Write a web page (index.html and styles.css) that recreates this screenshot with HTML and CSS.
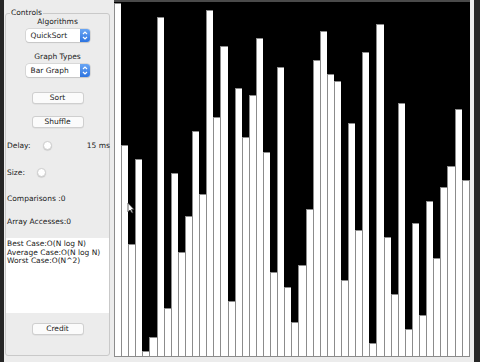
FILE: index.html
```html
<!DOCTYPE html>
<html lang="en">
<head>
    <meta charset="UTF-8">
    <meta name="viewport" content="width=device-width, initial-scale=1.0">
    <title>Sorting Visualizer</title>
    <link rel="stylesheet" href="styles.css">
</head>
<body>
    <div class="window">
        <div class="panel">
            <fieldset class="controls">
                <legend>Controls</legend>
                <div class="caption">Algorithms</div>
                <div class="popup">
                    <span>QuickSort</span>
                    <span class="stepper">
                        <svg width="10" height="13" viewBox="0 0 10 13"><path d="M3 5 L5 3 L7 5 M3 8 L5 10 L7 8" fill="none" stroke="#fff" stroke-width="1.2"/></svg>
                    </span>
                </div>
                <div class="caption gap-graph">Graph Types</div>
                <div class="popup">
                    <span>Bar Graph</span>
                    <span class="stepper">
                        <svg width="10" height="13" viewBox="0 0 10 13"><path d="M3 5 L5 3 L7 5 M3 8 L5 10 L7 8" fill="none" stroke="#fff" stroke-width="1.2"/></svg>
                    </span>
                </div>
                <button class="btn gap-sort">Sort</button>
                <button class="btn gap-shuffle">Shuffle</button>
                <div class="slider-row gap-delay">
                    <span>Delay:</span>
                    <span class="knob"></span>
                    <span class="value">15 ms</span>
                </div>
                <div class="slider-row gap-size">
                    <span>Size:</span>
                    <span class="knob"></span>
                </div>
                <div class="stat gap-comp">Comparisons :0</div>
                <div class="stat gap-access">Array Accesses:0</div>
                <div class="info">Best Case:O(N log N)<br>Average Case:O(N log N)<br>Worst Case:O(N^2)</div>
                <button class="btn gap-credit">Credit</button>
            </fieldset>
        </div>
        <div class="canvas">
            <div class="bar" style="height:353px"></div>
            <div class="bar" style="height:211px"></div>
            <div class="bar" style="height:112px"></div>
            <div class="bar" style="height:197px"></div>
            <div class="bar" style="height:5px"></div>
            <div class="bar" style="height:19px"></div>
            <div class="bar" style="height:339px"></div>
            <div class="bar" style="height:48px"></div>
            <div class="bar" style="height:183px"></div>
            <div class="bar" style="height:104px"></div>
            <div class="bar" style="height:140px"></div>
            <div class="bar" style="height:225px"></div>
            <div class="bar" style="height:162px"></div>
            <div class="bar" style="height:346px"></div>
            <div class="bar" style="height:239px"></div>
            <div class="bar" style="height:310px"></div>
            <div class="bar" style="height:55px"></div>
            <div class="bar" style="height:268px"></div>
            <div class="bar" style="height:219px"></div>
            <div class="bar" style="height:261px"></div>
            <div class="bar" style="height:318px"></div>
            <div class="bar" style="height:204px"></div>
            <div class="bar" style="height:84px"></div>
            <div class="bar" style="height:289px"></div>
            <div class="bar" style="height:69px"></div>
            <div class="bar" style="height:34px"></div>
            <div class="bar" style="height:91px"></div>
            <div class="bar" style="height:147px"></div>
            <div class="bar" style="height:296px"></div>
            <div class="bar" style="height:325px"></div>
            <div class="bar" style="height:282px"></div>
            <div class="bar" style="height:275px"></div>
            <div class="bar" style="height:76px"></div>
            <div class="bar" style="height:233px"></div>
            <div class="bar" style="height:126px"></div>
            <div class="bar" style="height:304px"></div>
            <div class="bar" style="height:13px"></div>
            <div class="bar" style="height:332px"></div>
            <div class="bar" style="height:119px"></div>
            <div class="bar" style="height:62px"></div>
            <div class="bar" style="height:253px"></div>
            <div class="bar" style="height:27px"></div>
            <div class="bar" style="height:133px"></div>
            <div class="bar" style="height:41px"></div>
            <div class="bar" style="height:155px"></div>
            <div class="bar" style="height:98px"></div>
            <div class="bar" style="height:169px"></div>
            <div class="bar" style="height:190px"></div>
            <div class="bar" style="height:247px"></div>
            <div class="bar" style="height:176px"></div>
            <svg class="cursor" width="8" height="12" viewBox="0 0 8 12"><path d="M1 1 L1 10 L3 8 L5 11 L6 10.5 L4.5 7.5 L7 7.5 Z" fill="#fff" stroke="#333" stroke-width="0.8"/></svg>
        </div>
    </div>
</body>
</html>
```

FILE: styles.css
```css
body {
    margin: 0;
    width: 480px;
    height: 362px;
    overflow: hidden;
    background-color: #262626;
    font-family: "DejaVu Sans", sans-serif;
    font-size: 7.5px;
    color: #1a1a1a;
}

.window {
    display: flex;
    margin-left: 4px;
    width: 470px;
    height: 362px;
    background-color: #ececec;
}

.panel {
    display: flex;
    width: 105px;
    padding: 8px 4px 6px 1px;
}

.controls {
    display: flex;
    flex-direction: column;
    align-items: center;
    flex: 1;
    margin: 0;
    padding: 0;
    border: 1px solid #c9c9c9;
    border-radius: 3px;
    min-width: 0;
}

.controls legend {
    margin-left: 4px;
    padding: 0 1px;
    line-height: 10px;
}

.caption {
    line-height: 8px;
}

.gap-graph { margin-top: 11px; }

.popup {
    display: flex;
    align-items: center;
    justify-content: space-between;
    box-sizing: border-box;
    width: 64px;
    height: 13px;
    margin-top: 3px;
    padding-left: 5px;
    background-color: #fff;
    border-radius: 3px;
    box-shadow: 0 0 0 0.5px #c4c4c4, 0 1px 1px rgba(0, 0, 0, 0.15);
}

.stepper {
    display: flex;
    width: 10px;
    height: 13px;
    border-radius: 0 3px 3px 0;
    background: linear-gradient(#6aa6f4, #2d74e0);
}

.btn {
    box-sizing: border-box;
    width: 52px;
    height: 12px;
    padding: 0;
    font: inherit;
    color: inherit;
    line-height: 10px;
    background-color: #fbfbfb;
    border: 1px solid #cfcfcf;
    border-radius: 3px;
    box-shadow: 0 0.5px 0.5px rgba(0, 0, 0, 0.08);
}

.gap-sort { margin-top: 15px; }
.gap-shuffle { margin-top: 12px; }
.gap-credit { margin-top: 10px; }

.slider-row {
    display: flex;
    align-items: center;
    gap: 12px;
    align-self: stretch;
    height: 10px;
    padding-left: 1px;
}

.slider-row .value {
    margin-left: auto;
    margin-right: -1px;
}

.knob {
    box-sizing: border-box;
    width: 9px;
    height: 9px;
    border-radius: 50%;
    background-color: #fff;
    border: 0.5px solid #d0d0d0;
    box-shadow: 0 0.5px 1px rgba(0, 0, 0, 0.2);
}

.gap-delay { margin-top: 12px; }
.gap-size { margin-top: 17px; }

.stat {
    align-self: stretch;
    padding-left: 1px;
    line-height: 8px;
}

.gap-comp { margin-top: 18px; }
.gap-access { margin-top: 15px; }

.info {
    align-self: stretch;
    box-sizing: border-box;
    height: 75px;
    margin-top: 12px;
    padding: 2px 1px;
    line-height: 8.7px;
    background-color: #fff;
}

.canvas {
    position: relative;
    display: flex;
    align-items: flex-end;
    width: 356px;
    height: 354px;
    background-color: #000;
    border-top: 2px solid #4a4a4a;
    border-bottom: 1px solid #8c8c8c;
}

.bar {
    flex: 1;
    box-sizing: border-box;
    background-color: #fff;
    border-left: 1px solid #8c8c8c;
    border-top: 1px solid #8c8c8c;
}

.bar:last-of-type {
    border-right: 1px solid #8c8c8c;
}

.cursor {
    position: absolute;
    left: 13px;
    top: 200px;
}
```
